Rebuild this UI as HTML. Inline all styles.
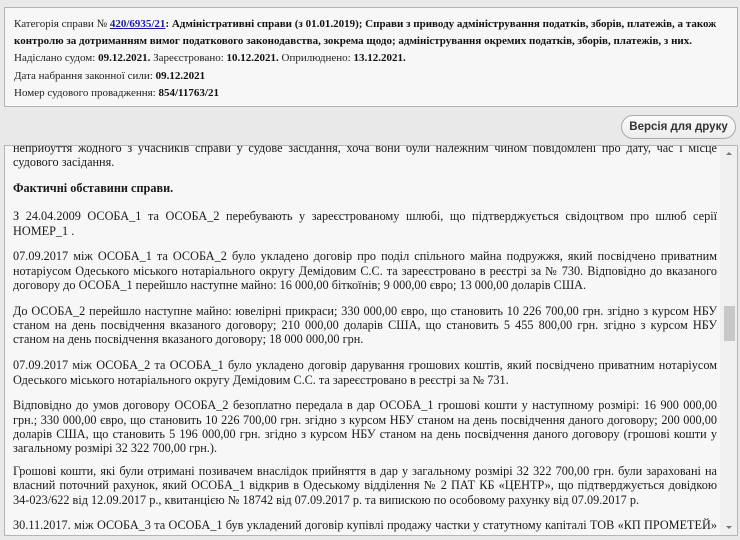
<!DOCTYPE html>
<html><head><meta charset="utf-8"><style>
*{margin:0;padding:0;box-sizing:border-box}
body{width:740px;height:540px;background:#e9e9e9;font-family:"Liberation Serif",serif;color:#111;overflow:hidden;position:relative}
#hdr{position:absolute;left:4px;top:7px;width:734px;height:100px;background:#f7f7f7;border:1px solid #b5b5b5;padding:8px 9px 0 9px;font-size:11px;line-height:17.2px;color:#222;overflow:hidden}
#hdr b{color:#111}
#hdr a{color:#1a1aa6;font-weight:bold;text-decoration:underline}
#btn{position:absolute;left:621px;top:115px;width:115px;height:24px;border:1px solid #aaa;border-radius:12px;background:linear-gradient(#fcfcfc,#ececec);font-family:"Liberation Sans",sans-serif;font-weight:bold;font-size:11.5px;color:#333;text-align:center;line-height:22px}
#box{position:absolute;left:4px;top:145px;width:734px;height:391px;background:#f7f7f7;border:1px solid #b5b5b5;overflow:hidden}
#txt{position:absolute;left:8px;top:-5px;width:704px;font-size:12.25px;line-height:14.3px;text-align:justify;color:#1a1a1a}
#txt p{margin-bottom:11.5px}
#sb{position:absolute;right:0;top:0;width:17px;height:100%;background:#f0f0f0}
#th{position:absolute;right:2px;top:160px;width:11px;height:35px;background:#c8c8c8}
.ar{position:absolute;right:5px;width:0;height:0;border-left:3px solid transparent;border-right:3px solid transparent}
</style></head><body>
<div id="hdr">
Категорія справи № <a>420/6935/21</a><b>: Адміністративні справи (з 01.01.2019); Справи з приводу адміністрування податків, зборів, платежів, а також контролю за дотриманням вимог податкового законодавства, зокрема щодо; адміністрування окремих податків, зборів, платежів, з них.</b><br>
Надіслано судом: <b>09.12.2021.</b> Зареєстровано: <b>10.12.2021.</b> Оприлюднено: <b>13.12.2021.</b><br>
Дата набрання законної сили: <b>09.12.2021</b><br>
Номер судового провадження: <b>854/11763/21</b>
</div>
<div id="btn">Версія для друку</div>
<div id="box">
<div id="txt">
<p>неприбуття жодного з учасників справи у судове засідання, хоча вони були належним чином повідомлені про дату, час і місце судового засідання.</p>
<p style="margin-bottom:14px"><b>Фактичні обставини справи.</b></p>
<p>З 24.04.2009 ОСОБА_1 та ОСОБА_2 перебувають у зареєстрованому шлюбі, що підтверджується свідоцтвом про шлюб серії НОМЕР_1 .</p>
<p>07.09.2017 між ОСОБА_1 та ОСОБА_2 було укладено договір про поділ спільного майна подружжя, який посвідчено приватним нотаріусом Одеського міського нотаріального округу Демідовим С.С. та зареєстровано в реєстрі за № 730. Відповідно до вказаного договору до ОСОБА_1 перейшло наступне майно: 16 000,00 біткоїнів; 9 000,00 євро; 13 000,00 доларів США.</p>
<p>До ОСОБА_2 перейшло наступне майно: ювелірні прикраси; 330 000,00 євро, що становить 10 226 700,00 грн. згідно з курсом НБУ станом на день посвідчення вказаного договору; 210 000,00 доларів США, що становить 5 455 800,00 грн. згідно з курсом НБУ станом на день посвідчення вказаного договору; 18 000 000,00 грн.</p>
<p>07.09.2017 між ОСОБА_2 та ОСОБА_1 було укладено договір дарування грошових коштів, який посвідчено приватним нотаріусом Одеського міського нотаріального округу Демідовим С.С. та зареєстровано в реєстрі за № 731.</p>
<p style="margin-bottom:8.5px">Відповідно до умов договору ОСОБА_2 безоплатно передала в дар ОСОБА_1 грошові кошти у наступному розмірі: 16 900 000,00 грн.; 330 000,00 євро, що становить 10 226 700,00 грн. згідно з курсом НБУ станом на день посвідчення даного договору; 200 000,00 доларів США, що становить 5 196 000,00 грн. згідно з курсом НБУ станом на день посвідчення даного договору (грошові кошти у загальному розмірі 32 322 700,00 грн.).</p>
<p>Грошові кошти, які були отримані позивачем внаслідок прийняття в дар у загальному розмірі 32 322 700,00 грн. були зараховані на власний поточний рахунок, який ОСОБА_1 відкрив в Одеському відділення № 2 ПАТ КБ «ЦЕНТР», що підтверджується довідкою 34-023/622 від 12.09.2017 р., квитанцією № 18742 від 07.09.2017 р. та випискою по особовому рахунку від 07.09.2017 р.</p>
<p>30.11.2017. між ОСОБА_3 та ОСОБА_1 був укладений договір купівлі продажу частки у статутному капіталі ТОВ «КП ПРОМЕТЕЙ» та інше.</p>
</div>
<div id="sb"><div class="ar" style="top:6px;border-bottom:3px solid #777"></div><div id="th"></div><div class="ar" style="bottom:6px;border-top:3px solid #777"></div></div>
</div>
</body></html>
